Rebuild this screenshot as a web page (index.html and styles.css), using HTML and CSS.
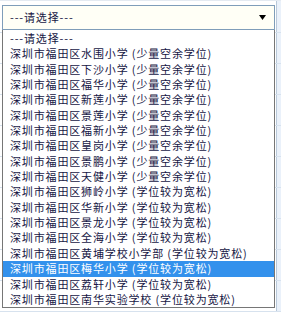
FILE: index.html
```html
<!DOCTYPE html>
<html lang="zh-CN">

<head>
	<meta charset="UTF-8">
	<meta name="viewport" content="width=device-width, initial-scale=1.0">
	<title>学校选择</title>
	<link rel="stylesheet" href="styles.css">
</head>

<body>

	<div class="sheet">
		<div class="row row-first">
			<div class="cell">
				<div class="picker">
					<div class="picker-box">
						<span>---请选择---</span>
						<svg class="arrow" width="7" height="5" viewBox="0 0 7 5"><path d="M0 0H7L3.5 5Z" fill="#000"/></svg>
					</div>
					<ul class="picker-list">
						<li>---请选择---</li>
						<li>深圳市福田区水围小学 (少量空余学位)</li>
						<li>深圳市福田区下沙小学 (少量空余学位)</li>
						<li>深圳市福田区福华小学 (少量空余学位)</li>
						<li>深圳市福田区新莲小学 (少量空余学位)</li>
						<li>深圳市福田区景莲小学 (少量空余学位)</li>
						<li>深圳市福田区福新小学 (少量空余学位)</li>
						<li>深圳市福田区皇岗小学 (少量空余学位)</li>
						<li>深圳市福田区景鹏小学 (少量空余学位)</li>
						<li>深圳市福田区天健小学 (少量空余学位)</li>
						<li>深圳市福田区狮岭小学 (学位较为宽松)</li>
						<li>深圳市福田区华新小学 (学位较为宽松)</li>
						<li>深圳市福田区景龙小学 (学位较为宽松)</li>
						<li>深圳市福田区全海小学 (学位较为宽松)</li>
						<li>深圳市福田区黄埔学校小学部 (学位较为宽松)</li>
						<li class="selected">深圳市福田区梅华小学 (学位较为宽松)</li>
						<li>深圳市福田区荔轩小学 (学位较为宽松)</li>
						<li>深圳市福田区南华实验学校 (学位较为宽松)</li>
					</ul>
				</div>
			</div>
			<div class="side"></div>
		</div>
		<div class="row"><div class="cell"></div><div class="side"></div></div>
		<div class="row"><div class="cell"></div><div class="side"></div></div>
		<div class="row"><div class="cell"></div><div class="side"></div></div>
		<div class="row"><div class="cell"></div><div class="side"></div></div>
		<div class="row"><div class="cell"></div><div class="side"></div></div>
		<div class="row"><div class="cell"></div><div class="side"></div></div>
		<div class="row"><div class="cell"></div><div class="side"></div></div>
		<div class="row"><div class="cell"></div><div class="side"></div></div>
		<div class="row">
			<div class="cell"><div class="small-input"></div></div>
			<div class="side"></div>
		</div>
	</div>

</body>

</html>
```

FILE: styles.css
```css
*,
*::before,
*::after {
	box-sizing: border-box;
}

body {
	margin: 0;
	padding: 0;
	background-color: #fff;
	font-family: "Noto Sans CJK SC", "DejaVu Sans", sans-serif;
	font-size: 11px;
	letter-spacing: 0.85px;
	color: #161644;
	overflow: hidden;
}

.sheet {
	width: 281px;
	border-top: 1px solid #e4eaf1;
}

.row {
	display: grid;
	grid-template-columns: 276px 1fr;
	height: 31px;
	border-bottom: 1px solid #d7e2ee;
}

.row-first {
	height: 32px;
}

.cell {
	position: relative;
	padding: 4px 0 0 2px;
}

.side {
	background-color: #eaf1fa;
	border-left: 1px solid #b9c9da;
}

.picker {
	position: relative;
	width: 273px;
	z-index: 2;
}

.picker-box {
	display: flex;
	align-items: center;
	justify-content: space-between;
	height: 25px;
	padding: 0 8px 0 7px;
	border: 1px solid #7f9db9;
	background-color: #fffff6;
	line-height: 1;
}

.arrow {
	display: block;
}

.picker-list {
	position: absolute;
	top: 100%;
	left: 0;
	width: 273px;
	margin: 0;
	padding: 1px 0 0;
	list-style: none;
	background-color: #fff;
	border: 1px solid #767676;
	border-top: 0;
}

.picker-list li {
	height: 15.35px;
	line-height: 15.35px;
	padding-left: 7px;
	white-space: nowrap;
}

.picker-list .selected {
	background-color: #3391ec;
	color: #fff;
}

.small-input {
	width: 16px;
	height: 20px;
	margin-top: -4px;
	border: 1px solid #8ba3bd;
	border-left: 0;
	background-color: #fff;
}
```
